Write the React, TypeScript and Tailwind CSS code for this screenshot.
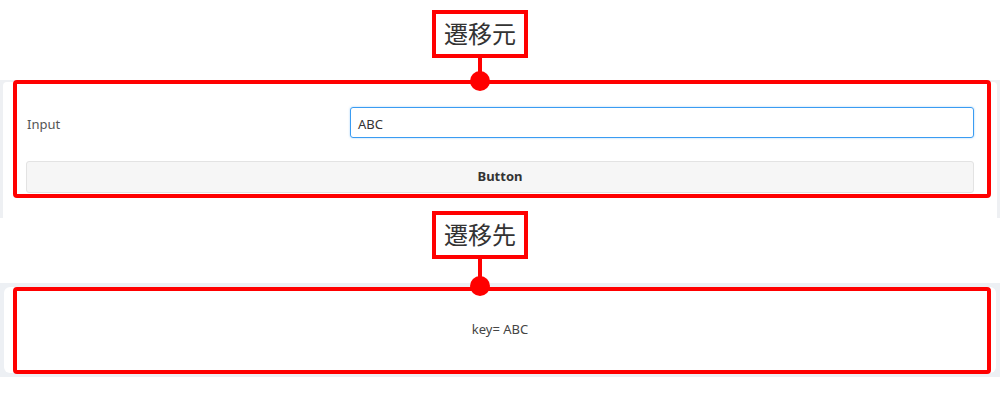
const RED = "bg-[#ff0000]";

function Label({ text }: { text: string }) {
  return (
    <div className="relative z-10 ml-[432px] flex w-[96px] flex-col items-center">
      <div className="flex h-[48px] w-[96px] items-center justify-center border-4 border-[#ff0000] bg-white text-[24px] leading-none text-[#333]">
        {text}
      </div>
      <div className={`w-[4px] ${RED} h-[24px]`} />
    </div>
  );
}

function Marker({ top }: { top: string }) {
  return (
    <div
      className={`absolute left-[470px] ${top} h-[20px] w-[20px] rounded-full ${RED}`}
    />
  );
}

export default function App() {
  return (
    <div className="h-[400px] w-[1000px] overflow-hidden bg-white font-['Noto_Sans','Noto_Sans_CJK_JP',sans-serif] text-[13px] text-[#333]">
      {/* 遷移元 */}
      <div className="pt-[10px]">
        <div className="-mb-[2px]">
          <Label text="遷移元" />
        </div>
      </div>
      <div className="relative bg-[#eef0f3] px-[3px] pt-[2px]">
        <div className="rounded-t-[4px] bg-white pb-[25px] pl-[23px] pr-[23px] pt-[25px]">
          <div className="flex items-center">
            <div className="w-[324px] pl-[1px] pt-[4px] text-[#555]">Input</div>
            <div className="flex h-[31px] flex-1 items-center rounded-[3px] border border-[#3a9cf2] px-[7px] pt-[4px] text-[#333] shadow-[0_0_2px_rgba(58,156,242,0.5)]">
              ABC
            </div>
          </div>
          <button className="mt-[23px] flex h-[32px] w-full items-center justify-center rounded-[3px] border border-[#e3e3e3] bg-[#f6f6f6] font-bold text-[#333]">
            Button
          </button>
        </div>
        <div className="absolute left-[13px] right-[9px] top-0 h-[118px] rounded-[4px] border-4 border-[#ff0000]" />
        <Marker top="-top-[9px]" />
      </div>

      {/* 遷移先 */}
      <div className="-mt-[7px]">
        <Label text="遷移先" />
      </div>
      <div className="relative bg-[#edf0f4] p-[4px]">
        <div className="flex h-[86px] items-center justify-center rounded-[6px] bg-white text-[#444]">
          key= ABC
        </div>
        <div className="absolute left-[13px] right-[9px] top-[4px] h-[87px] rounded-[4px] border-4 border-[#ff0000]" />
        <Marker top="-top-[7px]" />
      </div>
    </div>
  );
}
